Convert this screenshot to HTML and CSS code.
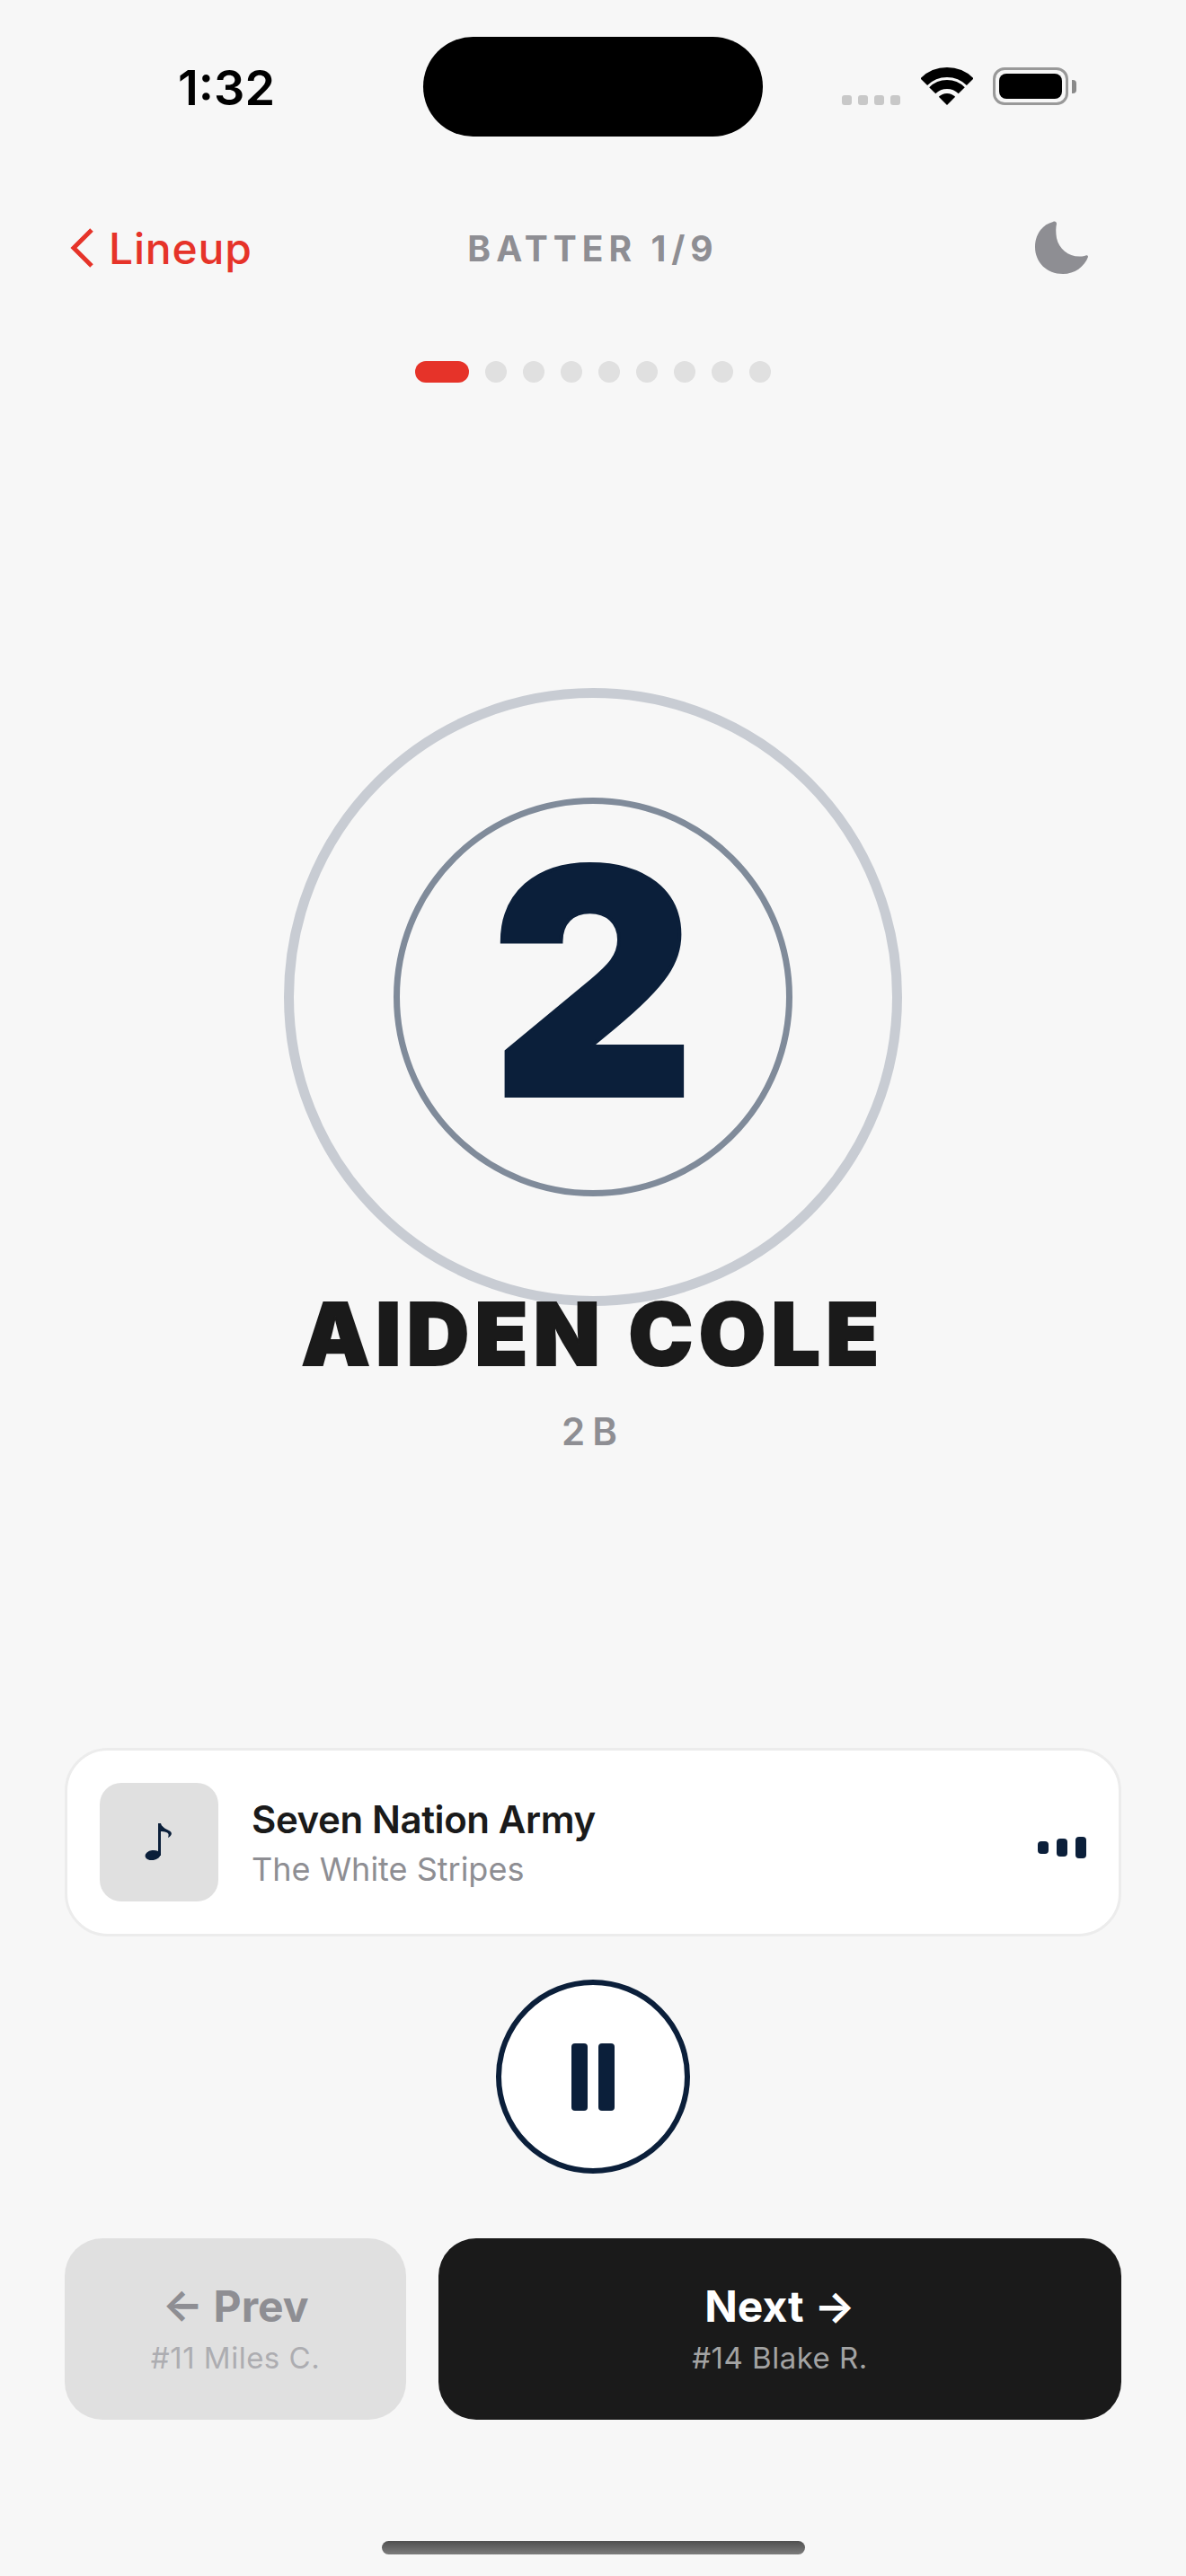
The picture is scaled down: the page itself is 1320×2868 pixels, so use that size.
FILE: index.html
```html
<!DOCTYPE html>
<html lang="en">
<head>
    <meta charset="UTF-8">
    <title>Batter 1/9</title>
    <link rel="stylesheet" href="styles.css">
</head>
<body>
<div class="screen">
    <!-- status bar -->
    <div class="status">
        <div class="island"></div>
        <div class="status-time">1:32</div>
        <div class="status-icons">
            <div class="signal"><i></i><i></i><i></i><i></i></div>
            <svg class="wifi" width="58" height="42" viewBox="0 0 58 42">
                <path d="M3.2 16.2A36.5 36.5 0 0 1 54.8 16.2" fill="none" stroke="#000" stroke-width="11"/>
                <path d="M12.74 25.74A23 23 0 0 1 45.26 25.74" fill="none" stroke="#000" stroke-width="10"/>
                <path d="M29 42L19.8 32.8A13 13 0 0 1 38.2 32.8Z" fill="#000"/>
            </svg>
            <div class="battery"><div class="battery-fill"></div></div>
            <div class="battery-cap"></div>
        </div>
    </div>

    <!-- header -->
    <div class="header">
        <div class="back">
            <svg width="27" height="44" viewBox="0 0 27 44">
                <path d="M24 2L4 22L24 42" fill="none" stroke="#e63329" stroke-width="5"/>
            </svg>
            <span>Lineup</span>
        </div>
        <div class="header-title">BATTER 1/9</div>
        <div class="header-right">
            <svg class="moon" width="60" height="60" viewBox="0 0 60 60">
                <path d="M20 1C8 4 0 15 0 29C0 46 13 59 31 59C44 59 55 51 59 40C59 38 57 38 55 39C40 42 27 33 24 19C23 13 23 8 24 3C24 1 22 0 20 1Z" fill="#8e8e93"/>
            </svg>
        </div>
    </div>

    <!-- batter progress -->
    <div class="pager">
        <div class="pager-active"></div>
        <div class="pager-dot"></div>
        <div class="pager-dot"></div>
        <div class="pager-dot"></div>
        <div class="pager-dot"></div>
        <div class="pager-dot"></div>
        <div class="pager-dot"></div>
        <div class="pager-dot"></div>
        <div class="pager-dot"></div>
    </div>

    <div class="stage">
        <div class="ring-outer">
            <div class="ring-inner">
                <div class="jersey">2</div>
            </div>
        </div>
        <div class="player-name">AIDEN COLE</div>
        <div class="player-pos">2B</div>
    </div>

    <!-- now playing -->
    <div class="track">
        <div class="track-art">
            <svg width="32" height="44" viewBox="0 0 32 44">
                <ellipse cx="9" cy="36.5" rx="8.5" ry="5.5" transform="rotate(-8 9 36.5)" fill="#0b1f3a"/>
                <rect x="15" y="1" width="3" height="36" fill="#0b1f3a"/>
                <path d="M18 1C19 5 23 7 27 9C31 11 31 14 26 17C27 14 27 12 24 11C22 10 20 10 18 10Z" fill="#0b1f3a"/>
            </svg>
        </div>
        <div class="track-info">
            <div class="track-title">Seven Nation Army</div>
            <div class="track-artist">The White Stripes</div>
        </div>
        <div class="track-bars">
            <div class="bar bar-1"></div>
            <div class="bar bar-2"></div>
            <div class="bar bar-3"></div>
        </div>
    </div>

    <div class="play-wrap">
        <div class="play-btn">
            <div class="pause"></div>
            <div class="pause"></div>
        </div>
    </div>

    <div class="nav">
        <div class="nav-btn nav-prev">
            <div class="nav-label">← Prev</div>
            <div class="nav-sub">#11 Miles C.</div>
        </div>
        <div class="nav-btn nav-next">
            <div class="nav-label">Next →</div>
            <div class="nav-sub">#14 Blake R.</div>
        </div>
    </div>

    <div class="home-bar"></div>
</div>
</body>
</html>
```

FILE: styles.css
```css
* {
    box-sizing: border-box;
    margin: 0;
    padding: 0;
}

body {
    background: #f7f7f7;
    font-family: "Inter", "Liberation Sans", sans-serif;
}

.screen {
    width: 1320px;
    height: 2868px;
    display: flex;
    flex-direction: column;
    position: relative;
    overflow: hidden;
}

/* status bar */
.status {
    display: flex;
    justify-content: space-between;
    align-items: flex-end;
    height: 117px;
    padding: 0 122px 0 198px;
}
.island {
    position: absolute;
    left: 471px;
    top: 41px;
    width: 378px;
    height: 111px;
    background: #000;
    border-radius: 56px;
}
.status-time {
    margin-bottom: -2px;
    font-size: 54px;
    font-weight: 600;
    line-height: 42px;
    color: #000;
}
.status-icons {
    display: flex;
    align-items: flex-end;
}
.signal {
    display: flex;
    gap: 7px;
    margin-right: 23px;
}
.signal i {
    display: block;
    width: 11px;
    height: 11px;
    border-radius: 3px;
    background: #c8c8c8;
}
.wifi {
    display: block;
    margin-right: 22px;
}
.battery {
    width: 84px;
    height: 42px;
    padding: 4px;
    border: 3px solid #999;
    border-radius: 13px;
}
.battery-fill {
    width: 100%;
    height: 100%;
    background: #000;
    border-radius: 8px;
}
.battery-cap {
    width: 5px;
    height: 15px;
    margin: 0 0 13px 4px;
    background: #8a8a8a;
    border-radius: 0 4px 4px 0;
}

/* header */
.header {
    display: flex;
    align-items: center;
    height: 60px;
    margin-top: 129px;
    padding: 0 72px;
}
.back {
    flex: 1;
    display: flex;
    align-items: center;
    gap: 16px;
    font-size: 48px;
    font-weight: 500;
    letter-spacing: 0.8px;
    color: #e63329;
}
.back svg {
    display: block;
    margin-left: 6px;
}
.header-title {
    font-size: 39px;
    font-weight: 700;
    letter-spacing: 6px;
    color: #8e8e93;
}
.header-right {
    flex: 1;
    display: flex;
    justify-content: flex-end;
}
.moon {
    display: block;
    margin-right: 36px;
}

/* progress */
.pager {
    display: flex;
    justify-content: center;
    gap: 18px;
    margin-top: 96px;
}
.pager-active {
    width: 60px;
    height: 24px;
    border-radius: 12px;
    background: #e63329;
}
.pager-dot {
    width: 24px;
    height: 24px;
    border-radius: 50%;
    background: #e0e0e0;
}

/* jersey number and name */
.stage {
    flex: 1;
    display: flex;
    flex-direction: column;
    align-items: center;
    padding-top: 340px;
}
.ring-outer {
    display: flex;
    align-items: center;
    justify-content: center;
    width: 688px;
    height: 688px;
    border: 11px solid #c8ccd3;
    border-radius: 50%;
}
.ring-inner {
    display: flex;
    align-items: center;
    justify-content: center;
    width: 444px;
    height: 444px;
    border: 7px solid #808b9a;
    border-radius: 50%;
}
.jersey {
    margin-bottom: 34px;
    font-size: 350px;
    font-weight: 900;
    line-height: 1;
    color: #0b1f3a;
    -webkit-text-stroke: 4px #0b1f3a;
}
.player-name {
    position: relative;
    margin-top: -29px;
    font-size: 96px;
    font-weight: 900;
    line-height: 120px;
    letter-spacing: 6.4px;
    color: #1a1a1a;
    -webkit-text-stroke: 2px #1a1a1a;
}
.player-pos {
    margin-top: 23px;
    font-size: 42px;
    font-weight: 600;
    letter-spacing: 8px;
    color: #8e8e93;
}

/* now playing */
.track {
    display: flex;
    align-items: center;
    height: 210px;
    margin: 0 72px;
    padding: 0 36px;
    background: #fff;
    border: 3px solid #ececec;
    border-radius: 48px;
}
.track-art {
    display: flex;
    align-items: center;
    justify-content: center;
    width: 132px;
    height: 132px;
    margin-right: 37px;
    background: #e0e0e0;
    border-radius: 24px;
}
.track-art svg {
    display: block;
}
.track-info {
    flex: 1;
}
.track-title {
    font-size: 42px;
    font-weight: 600;
    line-height: 51px;
    letter-spacing: -0.4px;
    color: #1a1a1a;
}
.track-artist {
    margin-top: 8px;
    font-size: 36px;
    line-height: 44px;
    color: #8e8e93;
}
.track-bars {
    display: flex;
    align-items: center;
    gap: 9px;
    margin-top: 12px;
}
.bar {
    width: 12px;
    background: #0b1f3a;
    border-radius: 4px;
}
.bar-1 {
    height: 14px;
}
.bar-2 {
    height: 20px;
}
.bar-3 {
    height: 24px;
}

/* play / pause */
.play-wrap {
    display: flex;
    justify-content: center;
    margin-top: 48px;
}
.play-btn {
    display: flex;
    align-items: center;
    justify-content: center;
    gap: 12px;
    width: 216px;
    height: 216px;
    background: #fff;
    border: 6px solid #0b1f3a;
    border-radius: 50%;
}
.pause {
    width: 18px;
    height: 75px;
    background: #0b1f3a;
    border-radius: 4px;
}

/* prev / next */
.nav {
    display: flex;
    gap: 36px;
    margin: 72px 72px 0;
}
.nav-btn {
    display: flex;
    flex-direction: column;
    align-items: center;
    justify-content: center;
    height: 202px;
    padding-bottom: 2px;
    border-radius: 42px;
}
.nav-prev {
    flex: 1;
    background: #e0e0e0;
    color: #8e8e93;
}
.nav-next {
    flex: 2;
    background: #1a1a1a;
    color: #fff;
}
.nav-label {
    font-size: 48px;
    font-weight: 700;
    line-height: 58px;
}
.nav-sub {
    margin-top: 8px;
    font-size: 33px;
    line-height: 40px;
    letter-spacing: 0.5px;
}
.nav-prev .nav-sub {
    color: #adadb1;
}
.nav-next .nav-sub {
    color: #a3a3a3;
}

.home-bar {
    width: 471px;
    height: 15px;
    margin: 135px auto 24px;
    background: linear-gradient(#505050, #7c7c7c);
    border-radius: 8px;
}
```
